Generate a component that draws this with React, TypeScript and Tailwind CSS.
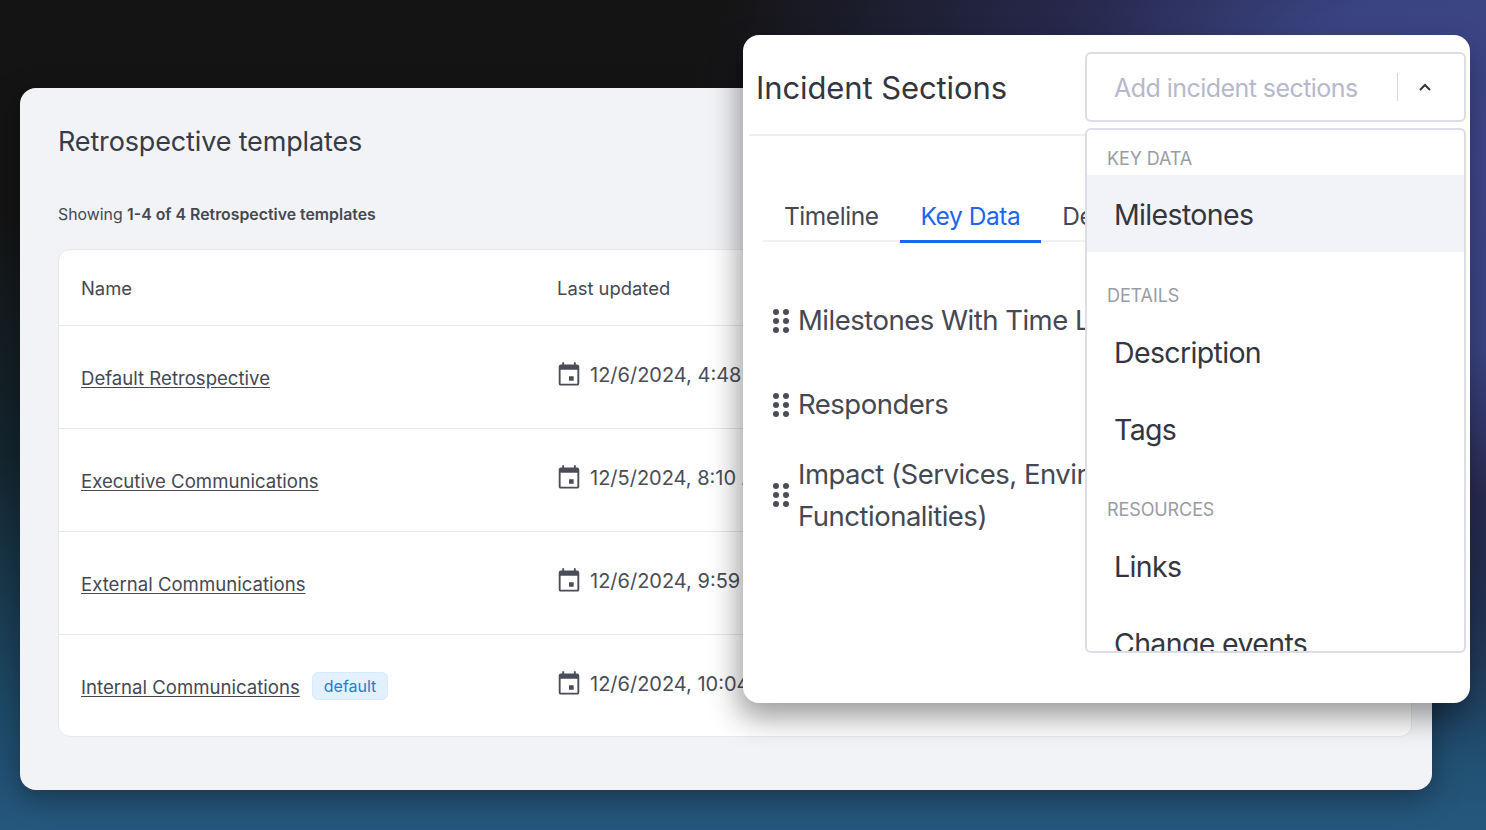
const rows = [
  { name: 'Default Retrospective', date: '12/6/2024, 4:48 PM' },
  { name: 'Executive Communications', date: '12/5/2024, 8:10 AM' },
  { name: 'External Communications', date: '12/6/2024, 9:59 AM' },
  { name: 'Internal Communications', date: '12/6/2024, 10:04 AM', isDefault: true },
];

function CalendarIcon() {
  return (
    <svg width="28" height="28" viewBox="0 0 24 24" fill="#4a4d57" className="shrink-0">
      <path d="M16 13h-4v4h4v-4zM16.2 1v2H7.8V1H6.2v2H5c-1.11 0-1.8.9-1.8 2v14c0 1.1.7 2 1.8 2h14c1.1 0 1.8-.9 1.8-2V5c0-1.1-.7-2-1.8-2h-1.2V1h-1.6zm3 18.4H4.8V7.6h14.4v11.8z" />
    </svg>
  );
}

function Grip() {
  return (
    <svg width="16" height="26" viewBox="0 0 16 26" fill="#4a4d57" className="shrink-0">
      <circle cx="3" cy="4" r="3" />
      <circle cx="13" cy="4" r="3" />
      <circle cx="3" cy="13" r="3" />
      <circle cx="13" cy="13" r="3" />
      <circle cx="3" cy="22" r="3" />
      <circle cx="13" cy="22" r="3" />
    </svg>
  );
}

function TemplateRow({ name, date, isDefault }: { name: string; date: string; isDefault?: boolean }) {
  return (
    <div className="flex h-[103px] items-center border-t border-[#e6e7ec] pl-[22px]">
      <div className="flex w-[476px] items-center gap-3 pt-[3px]">
        <a className="text-[18.6px] text-[#454852] underline underline-offset-2">{name}</a>
        {isDefault && (
          <span className="-mt-[2px] rounded-md border border-[#d6ebfb] bg-[#e2f1fd] px-[11px] py-[1px] text-[16px] text-[#1f7fc9]">
            default
          </span>
        )}
      </div>
      <div className="-ml-[2px] flex items-center gap-[7px] pb-[5px]">
        <CalendarIcon />
        <span className="text-[20px] text-[#4a4d57]">{date}</span>
      </div>
    </div>
  );
}

function MenuItem({ label, active }: { label: string; active?: boolean }) {
  return (
    <div className={`flex h-[77px] shrink-0 items-center pl-[27px] pt-1 text-[28.5px] tracking-[-0.65px] text-[#333640] ${active ? 'bg-[#f2f3f8]' : ''}`}>
      {label}
    </div>
  );
}

function MenuHeading({ label }: { label: string }) {
  return <div className="flex h-[46px] shrink-0 items-end pb-1 pl-5 text-[18px] tracking-[-0.1px] text-[#9a9ca5]">{label}</div>;
}

export default function App() {
  return (
    <div className="relative h-[830px] w-[1486px] overflow-hidden bg-[radial-gradient(ellipse_800px_600px_at_100%_20%,#3f4488_0%,#3b4483_30%,#282a50_55%,transparent_100%),linear-gradient(180deg,#141414_0%,#141414_25%,#14262f_55%,#1e4a68_85%,#25587e_100%)] pl-5 pt-[88px] font-['Inter',sans-serif]">
      <div className="h-[702px] w-[1412px] rounded-2xl bg-[#f2f3f7] pl-[38px] pr-5 pt-[33px] shadow-[0_8px_30px_rgba(0,0,0,0.35)]">
        <h1 className="pt-px text-[27px] leading-10 tracking-[-0.15px] text-[#383b45]">Retrospective templates</h1>
        <p className="mt-[41px] text-[15.85px] leading-6 text-[#454852]">
          Showing <span className="font-semibold">1-4 of 4 Retrospective templates</span>
        </p>
        <div className="mt-[22px] h-[488px] rounded-xl border border-[#e8e9ee] bg-white">
          <div className="flex h-[75px] items-center pl-[22px] pt-[3px] text-[18.4px] text-[#454852]">
            <div className="w-[476px]">Name</div>
            <div>Last updated</div>
          </div>
          {rows.map((r) => (
            <TemplateRow key={r.name} {...r} />
          ))}
        </div>
      </div>

      {/* floating panel on top of the table */}
      <div className="absolute left-[743px] top-[35px] h-[668px] w-[727px] rounded-2xl bg-white shadow-[-4px_14px_30px_rgba(0,0,0,0.4)]">
        <div className="mx-[6px] flex h-[101px] items-center border-b-2 border-[#eceef3] pl-[7px]">
          <h2 className="pt-2 text-[31px] tracking-[-0.1px] text-[#333640]">Incident Sections</h2>
        </div>

        <div className="mx-5 mt-[41px] flex h-[65px] gap-[42px] border-b-2 border-[#f0f1f4] pl-[21px] text-[24.5px] tracking-[-0.45px]">
          <div className="flex h-[65px] items-center pt-[14px] text-[#454852]">Timeline</div>
          <div className="relative flex h-[65px] items-center pt-[14px] text-[#1a66f0]">
            Key Data
            <div className="absolute -inset-x-[21px] -bottom-px h-[3px] bg-[#1a66f0]" />
          </div>
          <div className="flex h-[65px] items-center pt-[14px] text-[#454852]">Details</div>
        </div>

        <div className="ml-[30px] mt-[58px] flex flex-col text-[27.5px] tracking-[-0.5px] text-[#454852]">
          <div className="flex h-[42px] items-center gap-[9px]">
            <Grip />
            <span>Milestones With Time Line</span>
          </div>
          <div className="mt-[42px] flex h-[42px] items-center gap-[9px]">
            <Grip />
            <span>Responders</span>
          </div>
          <div className="mt-[27px] flex items-center gap-[9px]">
            <Grip />
            <span className="w-[640px] leading-[42px]">
              Impact (Services, Environments,
              <br />
              Functionalities)
            </span>
          </div>
        </div>

        {/* select control with its open menu */}
        <div className="absolute right-1 top-[17px] flex h-[70px] w-[381px] items-center rounded-md border-2 border-[#dcdde9] bg-white pl-[27px]">
          <span className="w-[283px] pt-1 text-[25px] tracking-[-0.55px] text-[#b6b8cc]">Add incident sections</span>
          <div className="h-[28px] w-px bg-[#d5d6e2]" />
          <svg width="16" height="16" viewBox="0 0 16 16" fill="none" stroke="#333640" strokeWidth="2" className="ml-[19px]">
            <path d="M3 11l5-5 5 5" />
          </svg>
        </div>
        <div className="absolute right-1 top-[93px] flex h-[525px] w-[381px] flex-col overflow-hidden rounded-md border-2 border-[#dcdde9] bg-white">
          <div className="flex h-[45px] shrink-0 items-end pb-[3px] pl-5 text-[18px] tracking-[-0.1px] text-[#9a9ca5]">KEY DATA</div>
          <MenuItem label="Milestones" active />
          <div className="h-[15px] shrink-0" />
          <MenuHeading label="DETAILS" />
          <MenuItem label="Description" />
          <MenuItem label="Tags" />
          <div className="h-[14px] shrink-0" />
          <MenuHeading label="RESOURCES" />
          <MenuItem label="Links" />
          <MenuItem label="Change events" />
        </div>
      </div>
    </div>
  );
}
